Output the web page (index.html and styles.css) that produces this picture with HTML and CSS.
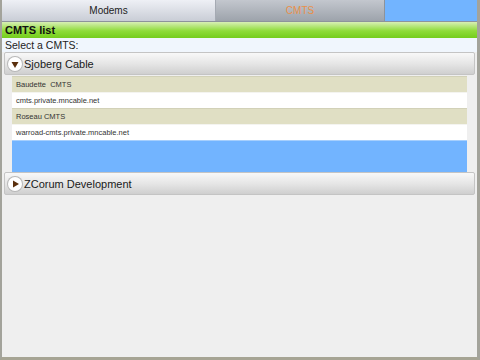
FILE: index.html
```html
<!DOCTYPE html>
<html lang="en">
<head>
    <meta charset="UTF-8">
    <title>CMTS list</title>
    <link rel="stylesheet" href="styles.css">
</head>
<body>
    <div class="frame">
        <div class="tabs">
            <div class="tab">Modems</div>
            <div class="tab tab-active">CMTS</div>
            <div class="tab-fill"></div>
        </div>
        <div class="title-bar">CMTS list</div>
        <div class="prompt">Select a CMTS:</div>
        <div class="content">
            <div class="group">
                <div class="group-head">
                    <span class="toggle">
                        <svg width="14" height="14" viewBox="0 0 14 14"><path d="M3.5 5 L10.5 5 L7 11 Z" fill="#5a2f0c"/></svg>
                    </span>
                    Sjoberg Cable
                </div>
                <div class="group-body">
                    <div class="row row-name">Baudette &nbsp;CMTS</div>
                    <div class="row row-host">cmts.private.mncable.net</div>
                    <div class="row row-name">Roseau CMTS</div>
                    <div class="row row-host">warroad-cmts.private.mncable.net</div>
                    <div class="row-selected"></div>
                </div>
            </div>
            <div class="group">
                <div class="group-head">
                    <span class="toggle">
                        <svg width="14" height="14" viewBox="0 0 14 14"><path d="M5 3.5 L11 7 L5 10.5 Z" fill="#5a2f0c"/></svg>
                    </span>
                    ZCorum Development
                </div>
            </div>
        </div>
    </div>
</body>
</html>
```

FILE: styles.css
```css
body {
    margin: 0;
    font-family: "Liberation Sans", Arial, sans-serif;
    color: #111;
    background: #efefef;
}

.frame {
    width: 480px;
    height: 360px;
    box-sizing: border-box;
    border-left: 2px solid #a3a39b;
    border-right: 3px solid #a3a39b;
    border-bottom: 3px solid #a6a494;
    display: flex;
    flex-direction: column;
    background: #efefef;
    overflow: hidden;
}

/* top tabs */
.tabs {
    display: flex;
    height: 22px;
    border-bottom: 1px solid #8d939b;
    box-sizing: border-box;
}

.tab {
    width: 213px;
    font-size: 10px;
    line-height: 21px;
    text-align: center;
    color: #222;
    background: linear-gradient(#eef0f5, #c9cdd6);
    border-right: 1px solid #a5aab3;
}

.tab-active {
    width: 168px;
    color: #e8904a;
    background: linear-gradient(#c3c7ce, #9da3ab);
    border-right: 1px solid #8d939b;
}

.tab-fill {
    flex: 1;
    background: #72b4ff;
}

.title-bar {
    height: 16px;
    line-height: 16px;
    padding-left: 3px;
    font-size: 11px;
    font-weight: bold;
    color: #111;
    background: linear-gradient(#d8efb5, #8fdc3a 55%, #74cd1c);
}

.prompt {
    height: 14px;
    line-height: 15px;
    padding-left: 3px;
    font-size: 10.5px;
    color: #222;
    background: #f0f6fd;
}

.content {
    flex: 1;
    padding: 0 2px;
}

.group-head {
    height: 21px;
    display: flex;
    align-items: center;
    gap: 2px;
    padding-left: 3px;
    font-size: 11px;
    color: #1a1a1a;
    background: linear-gradient(#f8f8f8, #e6e6e6 50%, #cfcfcf);
    border: 1px solid #c4c4c4;
    border-radius: 2px;
}

.toggle {
    width: 14px;
    height: 14px;
    border-radius: 50%;
    background: #fff;
    box-shadow: 0 0 0 1px #b8b8b8;
    display: flex;
}

.group-body {
    margin: 1px 8px 0;
}

.row {
    height: 15px;
    line-height: 15px;
    padding-left: 4px;
    font-size: 7.5px;
    color: #333;
    border-top: 1px solid #f4f4f0;
}

.row-name {
    background: #e0dfc4;
    border-top-color: #d2d1b8;
}

.row-host {
    background: #fff;
}

.row-selected {
    height: 31px;
    background: #72b4ff;
    border-top: 1px solid #a6cffd;
}
```
